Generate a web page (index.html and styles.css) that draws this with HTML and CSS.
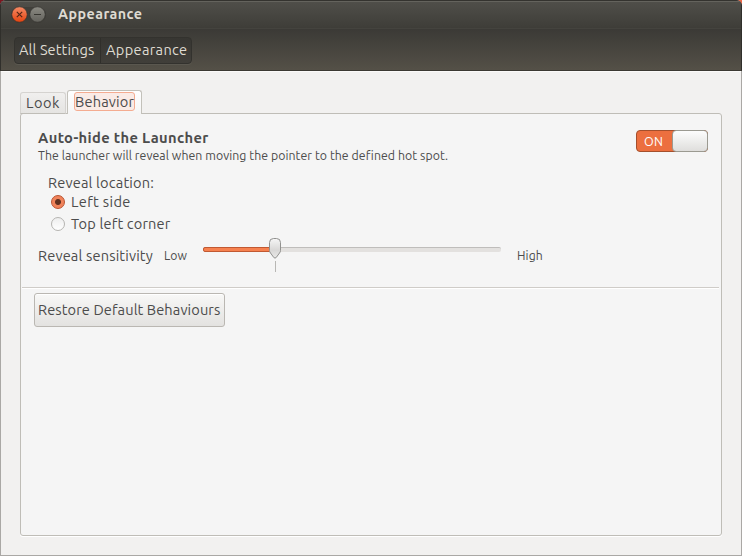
FILE: index.html
```
<!DOCTYPE html>
<html lang="en">
<head>
<meta charset="utf-8">
<title>Appearance</title>
<link rel="stylesheet" href="styles.css">
</head>
<body>
<div class="window">
  <header class="header">
    <div class="titlebar">
      <svg class="controls" width="37" height="18" viewBox="0 0 37 18">
        <defs>
          <linearGradient id="close" x1="0" y1="0" x2="0" y2="1"><stop offset="0" stop-color="#f58b66"/><stop offset="1" stop-color="#e5430f"/></linearGradient>
          <linearGradient id="min" x1="0" y1="0" x2="0" y2="1"><stop offset="0" stop-color="#8b8a83"/><stop offset="1" stop-color="#63625c"/></linearGradient>
        </defs>
        <rect x="1" y="1" width="35" height="16" rx="8" fill="#403f3a"/>
        <circle cx="9.5" cy="8.5" r="7.700" fill="url(#close)" stroke="#33312d" stroke-width=".6"/>
        <path d="M6.800 5.800l5.400 5.400M12.200 5.800l-5.400 5.400" stroke="#562616" stroke-width="1.2"/>
        <circle cx="27.5" cy="8.5" r="7.700" fill="url(#min)" stroke="#33312d" stroke-width=".6"/>
        <path d="M24 8.5h7" stroke="#373631" stroke-width="1.1"/>
      </svg>
      <h1 class="title">Appearance</h1>
    </div>
    <nav class="toolbar">
      <div class="crumbs">
        <span class="crumb crumb-all">All Settings</span>
        <span class="crumb crumb-current">Appearance</span>
      </div>
    </nav>
  </header>
  <main class="content">
    <div class="tabs">
      <div class="tab"><span class="look">Look</span></div>
      <div class="tab active"><span class="focus">Behavior</span></div>
    </div>
    <section class="panel">
      <div class="autohide">
        <div class="copy">
          <h2 class="heading">Auto-hide the Launcher</h2>
          <p class="desc">The launcher will reveal when moving the pointer to the defined hot spot.</p>
        </div>
        <div class="switch"><span class="on">ON</span><span class="knob"></span></div>
      </div>
      <div class="location">
        <div class="label">Reveal location:</div>
        <div class="option"><span class="radio checked"></span><span class="left">Left side</span></div>
        <div class="option"><span class="radio"></span><span class="corner">Top left corner</span></div>
      </div>
      <div class="sensitivity">
        <span class="sens-label">Reveal sensitivity</span>
        <span class="low">Low</span>
        <div class="slider">
          <div class="track"><div class="fill"></div></div>
          <svg class="thumb" width="14" height="36" viewBox="0 0 14 36">
            <defs><linearGradient id="thumb" x1="0" y1="0" x2="0" y2="1"><stop offset="0" stop-color="#f6f6f6"/><stop offset=".6" stop-color="#d8d7d6"/><stop offset="1" stop-color="#e9e9e8"/></linearGradient></defs>
            <path d="M1.500 5.500q0-4 4-4h3q4 0 4 4v8q0 1.500-1 2.500l-3.300 4.500q-1.200 1.200-2.400 0l-3.300-4.500q-1-1-1-2.500z" fill="url(#thumb)" stroke="#91918f"/>
            <path d="M7.500 24v11" stroke="#b8b7b4"/>
          </svg>
        </div>
        <span class="high">High</span>
      </div>
      <hr class="rule">
      <button class="restore"><span>Restore Default Behaviours</span></button>
    </section>
  </main>
</div>
</body>
</html>
```
FILE: styles.css
```
* { box-sizing: border-box; }
html { height: 100%; background: linear-gradient(90deg, #7c1720 50%, #ed6848 50%); }
body { margin: 0; height: 100%; overflow: hidden; font: 14.6px/20px Ubuntu, "Noto Sans", sans-serif; letter-spacing: .11px; color: #4c4c4c; }
h1, h2, p { margin: 0; }
span, h1, h2, p, .label { white-space: nowrap; }
.window { display: flex; flex-direction: column; height: 100%; background: #f2f1f0; border-radius: 6px 6px 0 0; overflow: hidden; }
.header { flex: none; height: 71px; border: solid #302f2b; border-width: 0 1px; border-bottom: 1px solid #3b3933; background: #3c3b37; color: #dfdbd2; }
.titlebar { display: flex; align-items: center; height: 28px; padding-left: 9px; border-top: 1px solid #34332f; box-shadow: inset 0 1px #64635d; background: linear-gradient(#504f4a, #3e3d38); }
.controls { display: block; margin-top: 1px; }
.title { margin: -2px 0 0 11px; font-size: 14.3px; line-height: 20px; font-weight: 700; letter-spacing: .44px; }
.toolbar { height: 42px; padding: 8px 13px 0; border-top: 1px solid #44433e; background: linear-gradient(#3b3a36, #545047); }
.crumbs { display: inline-flex; height: 27px; border: 1px solid #33322e; border-radius: 4px; background: linear-gradient(#373632, #413f3a); box-shadow: 0 1px #5a574f; }
.crumb { line-height: 23px; }
.crumb-all { width: 86px; padding-left: 4px; border-right: 1px solid #302f2b; letter-spacing: .1px; }
.crumb-current { width: 90px; padding-left: 5px; letter-spacing: .32px; }
.content { flex: 1; display: flex; flex-direction: column; padding: 19px 19px 19px; border: 1px solid #aaa8a5; border-top: 0; box-shadow: inset 0 1px #fbfaf9; }
.tabs { display: flex; align-items: flex-end; height: 24px; margin-bottom: -1px; z-index: 1; }
.tab { height: 22px; width: 46px; margin-right: 1px; padding-left: 5px; border: 1px solid #d5d3d0; border-bottom-color: #bfbdb7; border-radius: 3px 3px 0 0; background: linear-gradient(#f0efee, #e5e4e2); line-height: 20px; }
.look { letter-spacing: .5px; }
.tab.active { height: 24px; width: 75px; padding: 1px 0 0 6px; border-color: #c3c1ba; border-bottom: 0; background: linear-gradient(#fff, #f5f5f5); }
.focus { display: block; width: 61px; height: 19px; border: 1px solid #f4ac91; border-radius: 3px; background: #faebe6; line-height: 18px; letter-spacing: .16px; }
.panel { flex: 1; padding: 14px 0 0; border: 1px solid #bfbdb7; border-radius: 3px; background: #f5f5f5; box-shadow: 0 1px #fff; }
.autohide { display: flex; justify-content: space-between; padding: 0 13px 0 17px; height: 45px; }
.heading { font-size: 14.7px; line-height: 20px; letter-spacing: .36px; }
.desc { font-size: 12.3px; line-height: 16px; letter-spacing: .055px; }
.switch { display: flex; justify-content: space-between; width: 72px; height: 22px; margin-top: 2px; border: 1px solid #a44f2c; border-radius: 4px; background: #ec6f3f; }
.on { padding-left: 7px; color: #fff; font-size: 12.5px; line-height: 21px; letter-spacing: .2px; }
.knob { width: 36px; height: 22px; margin: -1px; border: 1px solid #9b9a91; border-radius: 4px; background: linear-gradient(#fdfdfd, #dfdedc); }
.location { padding-left: 27px; height: 62px; }
.label { height: 20px; letter-spacing: .17px; }
.option { display: flex; align-items: center; height: 22px; padding-left: 3px; line-height: 22px; margin-top: -2px; }
.option + .option { margin-top: 0; }
.left { letter-spacing: .35px; }
.corner { letter-spacing: .16px; }
.radio { width: 14px; height: 14px; margin-right: 6px; border: 1px solid #b5b4b1; border-radius: 50%; background: linear-gradient(#eee, #fff); }
.checked { border-color: #b95230; background: radial-gradient(circle, #60301f 0 2.5px, #f0835b 3.5px); }
.sensitivity { display: flex; height: 52px; padding: 11px 0 0 17px; }
.sens-label { width: 126px; letter-spacing: .15px; }
.low, .high { font-size: 12.2px; }
.low { width: 39px; }
.slider { position: relative; width: 299px; height: 36px; margin-top: -10px; }
.track { width: 298px; height: 5px; margin-top: 11px; border-radius: 2px; background: #e3e1df; border-top: 1px solid #bfbdbb; }
.fill { width: 73px; height: 5px; margin-top: -1px; border: 1px solid #c15932; border-radius: 2px; background: #f6814f; }
.thumb { position: absolute; left: 65px; top: 1px; }
.high { padding-left: 15px; }
.rule { height: 2px; margin: 0 2px 4px 1px; border: 0; background: linear-gradient(#cfccc8 50%, #fff 50%); }
.restore { display: block; width: 191px; height: 34px; margin-left: 13px; padding: 0 0 0 3px; border: 1px solid #bab7b2; border-radius: 3px; background: linear-gradient(#f8f8f7, #e3e2e0); color: inherit; font: inherit; letter-spacing: .1px; text-align: left; box-shadow: inset 0 1px #fff; }
```
